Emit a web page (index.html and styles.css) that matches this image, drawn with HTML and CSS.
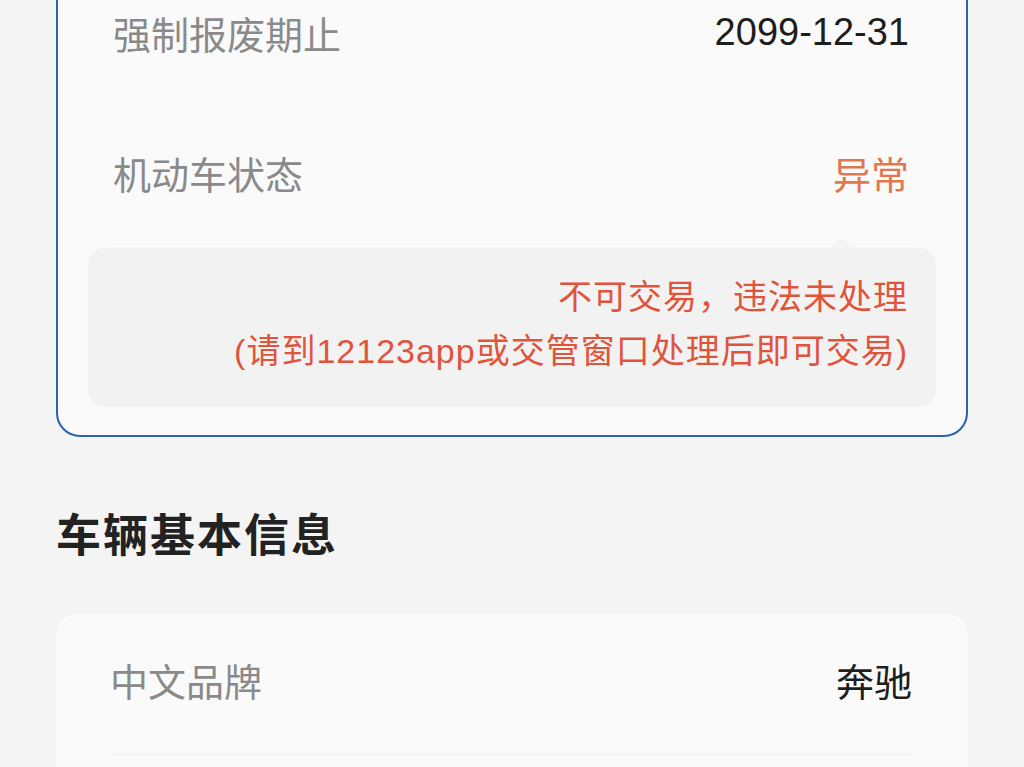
FILE: index.html
```html
<!DOCTYPE html>
<html lang="zh-CN">
<head>
<meta charset="utf-8">
<link rel="stylesheet" href="styles.css">
<title>车辆信息</title>
</head>
<body>
<div class="page">

  <div class="card card-status">
    <div class="row">
      <span class="label">强制报废期止</span>
      <span class="value">2099-12-31</span>
    </div>
    <div class="row">
      <span class="label">机动车状态</span>
      <span class="value warn">异常</span>
    </div>
    <div class="notice">
      <p>不可交易，违法未处理</p>
      <p>(请到12123app或交管窗口处理后即可交易)</p>
    </div>
  </div>

  <h2 class="section-title">车辆基本信息</h2>

  <div class="card card-info">
    <div class="row row-line">
      <span class="label">中文品牌</span>
      <span class="value">奔驰</span>
    </div>
  </div>

</div>
</body>
</html>
```

FILE: styles.css
```css
html, body { margin: 0; padding: 0; }

body {
  background: #f4f4f4;
  color: #222;
  font-family: "Liberation Sans", "Noto Sans CJK SC", sans-serif;
  overflow: hidden;
}

.page {
  padding: 0 56px;
}

.card {
  background: #fafafa;
  border-radius: 22px;
  padding: 0 56px 0 54px;
}

/* status card runs off the top of the screen */
.card-status {
  margin-top: -65px;
  padding: 25px 30px 28px 30px;
  border: 2px solid #2a62ad;
  border-radius: 24px;
}
.card-status .row {
  padding: 0 27px 0 25px;
}

/* list keeps going below the fold */
.card-info {
  padding-bottom: 60px;
}
.card-info .row {
  padding-bottom: 10px;
  height: 130px;
}

.row {
  height: 140px;
  display: flex;
  align-items: center;
  justify-content: space-between;
}
.row-line {
  border-bottom: 1px solid #efefef;
}

.label {
  font-size: 38px;
  color: #8a8a8a;
}
.value {
  font-size: 38px;
  color: #1e1e1e;
}
.value.warn {
  color: #e0784e;
}

.notice {
  position: relative;
  margin-top: 5px;
  background: #f2f2f2;
  border-top: 1px solid #f6f6f6;
  border-radius: 18px;
  padding: 22px 28px 29px;
  text-align: right;
  color: #e0543c;
  font-size: 34px;
  line-height: 54px;
  letter-spacing: 1px;
}
.notice::before {
  content: "";
  position: absolute;
  top: -22px;
  right: 84px;
  border: 11px solid transparent;
  border-bottom-color: #f4f4f4;
}
.notice p { margin: 0; }

.section-title {
  margin: 0;
  padding: 67px 0 44px;
  font-size: 45px;
  line-height: 66px;
  font-weight: bold;
  color: #222;
  letter-spacing: 2px;
}
```
